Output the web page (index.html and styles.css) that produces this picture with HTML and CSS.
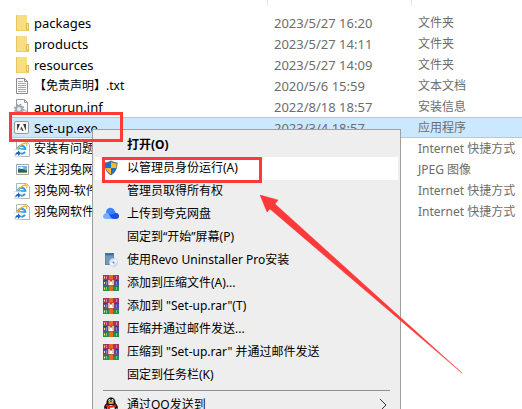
FILE: index.html
```
<!DOCTYPE html>
<html lang="zh-CN">
<head>
  <meta charset="UTF-8">
  <meta name="viewport" content="width=device-width, initial-scale=1.0">
  <title>Set-up</title>
  <link rel="stylesheet" href="styles.css">
</head>
<body>

  <!-- Shared icons -->
  <svg class="icon-defs" aria-hidden="true">
    <symbol id="icon-folder" viewBox="-2 0 16 16">
      <path d="M0 0h11v8h2v8H0z" fill="#f0cf6b"/>
      <path d="M0 0h11v15H1L0 16z" fill="#f8dd82"/>
      <path d="M0 0h1v16H0z" fill="#e9c55a"/>
      <path d="M10.500 8.500h2v6h-2z" fill="#fae8a5" stroke="#dfb850"/>
    </symbol>
    <symbol id="icon-text" viewBox="-2 0 16 16">
      <path d="M.5.5h8l3 3v12H.5z" fill="#fafafa" stroke="#8c8c8c"/>
      <path d="M8.500.5v3h3" fill="none" stroke="#8c8c8c"/>
      <path d="M2 3.500h5M2 5.500h8M2 7.500h8M2 9.500h8M2 11.500h8M2 13.500h8" stroke="#aaa"/>
    </symbol>
    <symbol id="icon-inf" viewBox="0 0 16 16">
      <path d="M2.500.5h8l3 3v12h-11z" fill="#fafafa" stroke="#999"/>
      <path d="M10.500.5v3h3" fill="none" stroke="#999"/>
      <circle cx="5" cy="10" r="3" fill="#eee" stroke="#a0a8b0" stroke-width="2"/>
      <circle cx="5" cy="10" r="4.500" fill="none" stroke="#a0a8b0" stroke-width="1.500" stroke-dasharray="2 1.530"/>
      <circle cx="10.500" cy="13" r="2" fill="#eee" stroke="#a4adb6"/>
    </symbol>
    <symbol id="icon-adobe" viewBox="0 0 16 16">
      <rect x=".5" y="1.500" width="14" height="12" rx="1.500" fill="#f7f7f7" stroke="#9a9a9a"/>
      <path d="M3 4h3L3 11zM9 4h3v7zM7.500 6.500 9.500 11H8.200l-.6-1.500H6.200z" fill="#3c3c3c"/>
    </symbol>
    <symbol id="icon-ie" viewBox="0 0 16 16">
      <path d="M2.500.5h10l3 3v12h-13z" fill="#fff" stroke="#b5b5b5"/>
      <path d="M11.600 8.500A4 4 0 1 0 11 10.800" fill="none" stroke="#2e9be6" stroke-width="2"/>
      <path d="M4.500 8h7.500" stroke="#2e9be6" stroke-width="1.600"/>
      <path d="M3 11.500C1.500 8.500 7.500 2 12 2c1.500.2 1 2 .2 3" fill="none" stroke="#f0b72f" stroke-width="1.400"/>
      <path d="M0 8.500h7v7H0z" fill="#fff" stroke="#ccc" stroke-width=".5"/>
      <path d="M1.500 15c-.5-2.800.7-4 2.500-4V9.300l3 3-3 2.700v-2c-1.200 0-2 .8-2.500 2z" fill="#1769c4"/>
    </symbol>
    <symbol id="icon-jpeg" viewBox="-2 0 16 16">
      <path d="M.5 2.500h12v10H.5z" fill="#fff" stroke="#a5a5a5"/>
      <path d="M2 4h9v7H2z" fill="#69b5e8"/>
      <path d="M2 7.500c3-2.500 5 0 9 1V11H2z" fill="#2d5c7d"/>
      <path d="M2 6c3-2 4-1 6 0l-2 1z" fill="#e7f4fc"/>
      <path d="M2 10h9v1H2z" fill="#6aa35e"/>
    </symbol>
    <symbol id="icon-shield" viewBox="0 0 16 16">
      <path d="M8 .5c2 1.400 4 1.800 6.500 2C14.500 8 13 12.500 8 15.500 3 12.500 1.500 8 1.500 2.500 4 2.300 6 1.900 8 .5z" fill="#5b6b78"/>
      <path d="M8 2v6H2.800C2.500 6.500 2.500 5 2.500 3.500 5 3.200 6.500 2.800 8 2z" fill="#1573c9"/>
      <path d="M8 2c1.500.8 3 1.200 5.500 1.500 0 1.500 0 3-.3 4.500H8z" fill="#fcb924"/>
      <path d="M2.800 8H8v6.300C5.500 12.800 3.500 10.500 2.800 8z" fill="#fcb924"/>
      <path d="M13.200 8H8v6.300c2.500-1.500 4.500-3.800 5.200-6.300z" fill="#1573c9"/>
    </symbol>
    <symbol id="icon-cloud" viewBox="0 0 16 16">
      <path d="M3 6c0-5 7-6 8.500-1.500L14 9l-5 4H4z" fill="#3f82ff"/>
      <path d="M0 10.500C0 7 4 6 6 8l4 5H3c-2 0-3-1-3-2.500z" fill="#75b0ff"/>
      <path d="M6 8c1 2 2 5 5 5h2c4 0 4-5.500.5-6C11 6.500 10 9.500 6 8z" fill="#1e50e6"/>
    </symbol>
    <symbol id="icon-revo" viewBox="0 0 16 16">
      <path d="M2 1h9v12H2z" fill="#5e87b2"/>
      <path d="M2 1h9v2H2z" fill="#416f9f"/>
      <path d="M3 4h7v8H3z" fill="#7198bd"/>
      <circle cx="10.500" cy="10.500" r="4" fill="#dbe8f3" stroke="#c0d0de"/>
      <path d="M10.500 10.500 12 6.800l2.300 2.400zM10.500 10.500l-1.300 3.700-2.300-2.500z" fill="#f9fcff"/>
      <circle cx="10.500" cy="10.500" r="1" fill="#648bb0"/>
    </symbol>
    <symbol id="icon-rar" viewBox="0 0 16 16">
      <path d="M0 0h16v5H0z" fill="#a83262"/>
      <path d="M0 5.500h16v5H0z" fill="#3f49b9"/>
      <path d="M0 11h16v5H0z" fill="#25914b"/>
      <path d="M0 5h16v.8H0zM0 10.400h16v.8H0z" fill="#27233f"/>
      <path d="M1 1.500h1v2H1zM1 7h1v2H1zM1 12.500h1v2H1z" fill="#ffe16c"/>
      <path d="M3 1h1v3H3zM3 6.500h1v3H3zM3 12h1v3H3zM13 1h1v3h-1zM13 6.500h1v3h-1zM13 12h1v3h-1z" fill="#ffffff66"/>
      <path d="M6 0h4v16H6z" fill="#e56b19"/>
      <path d="M4.500 4.500h7v6h-7z" fill="#b64335"/>
      <path d="M6 5v4.500h1.500V7h1v2.500H10V5" fill="none" stroke="#fff" stroke-width="1.200"/>
    </symbol>
    <symbol id="icon-qq" viewBox="0 0 16 16">
      <path d="M3.500 6C3-1.500 13-1.500 12.500 6c2 2 3 4.500 2 6-1 0-1.500-1-1.500-1 0 2-1 3-1 3H4s-1-1-1-3c0 0-.5 1-1.500 1-1-1.500 0-4 2-6z" fill="#111"/>
      <ellipse cx="8" cy="11.500" rx="3.700" ry="3.500" fill="#fff"/>
      <ellipse cx="6.500" cy="3.500" rx="1.100" ry="1.500" fill="#fff"/>
      <ellipse cx="9.500" cy="3.500" rx="1.100" ry="1.500" fill="#fff"/>
      <circle cx="6.800" cy="3.700" r=".5"/>
      <circle cx="9.200" cy="3.700" r=".5"/>
      <ellipse cx="8" cy="6" rx="3" ry="1" fill="#f5ad19"/>
      <path d="M3 7.500c3 1.500 7 1.500 10 0v2c-2 1-4 1.300-6 1.200V13H4.500v-3L3 9.500z" fill="#e61f23"/>
      <path d="M3 14h4v2H3zM9 14h4v2H9z" fill="#f5ad19"/>
    </symbol>
  </svg>

  <!-- File list -->
  <table class="file-list">
    <thead>
      <tr>
        <th class="col-name"><span class="divider"></span></th>
        <th class="col-date"><span class="divider"></span></th>
        <th></th>
      </tr>
    </thead>
    <tbody>
      <tr>
        <td><div class="file-name"><svg class="icon"><use href="#icon-folder"/></svg>packages</div></td>
        <td>2023/5/27 16:20</td>
        <td><span class="cjk">文件夹</span></td>
      </tr>
      <tr>
        <td><div class="file-name"><svg class="icon"><use href="#icon-folder"/></svg>products</div></td>
        <td>2023/5/27 14:11</td>
        <td><span class="cjk">文件夹</span></td>
      </tr>
      <tr>
        <td><div class="file-name"><svg class="icon"><use href="#icon-folder"/></svg>resources</div></td>
        <td>2023/5/27 14:09</td>
        <td><span class="cjk">文件夹</span></td>
      </tr>
      <tr>
        <td><div class="file-name"><svg class="icon"><use href="#icon-text"/></svg><span class="cjk">【免责声明】.txt</span></div></td>
        <td>2020/5/6 15:59</td>
        <td><span class="cjk">文本文档</span></td>
      </tr>
      <tr>
        <td><div class="file-name"><svg class="icon"><use href="#icon-inf"/></svg>autorun.inf</div></td>
        <td>2022/8/18 18:57</td>
        <td><span class="cjk">安装信息</span></td>
      </tr>
      <tr class="selected">
        <td><div class="file-name"><svg class="icon"><use href="#icon-adobe"/></svg>Set-up.exe</div></td>
        <td>2023/3/4 18:57</td>
        <td><span class="cjk">应用程序</span></td>
      </tr>
      <tr>
        <td><div class="file-name"><svg class="icon"><use href="#icon-ie"/></svg><span class="cjk">安装有问题</span></div></td>
        <td></td>
        <td><span class="cjk">Internet 快捷方式</span></td>
      </tr>
      <tr>
        <td><div class="file-name"><svg class="icon"><use href="#icon-jpeg"/></svg><span class="cjk">关注羽兔网</span></div></td>
        <td></td>
        <td><span class="cjk">JPEG 图像</span></td>
      </tr>
      <tr>
        <td><div class="file-name"><svg class="icon"><use href="#icon-ie"/></svg><span class="cjk">羽兔网-软件</span></div></td>
        <td></td>
        <td><span class="cjk">Internet 快捷方式</span></td>
      </tr>
      <tr>
        <td><div class="file-name"><svg class="icon"><use href="#icon-ie"/></svg><span class="cjk">羽兔网软件</span></div></td>
        <td></td>
        <td><span class="cjk">Internet 快捷方式</span></td>
      </tr>
    </tbody>
  </table>

  <!-- Context menu -->
  <div class="context-menu">
    <button class="menu-item default"><span class="icon"></span><span>打开(O)</span></button>
    <button class="menu-item active"><svg class="icon"><use href="#icon-shield"/></svg><span>以管理员身份运行(A)</span></button>
    <button class="menu-item"><span class="icon"></span><span>管理员取得所有权</span></button>
    <button class="menu-item"><svg class="icon"><use href="#icon-cloud"/></svg><span>上传到夸克网盘</span></button>
    <button class="menu-item"><span class="icon"></span><span>固定到“开始”屏幕(P)</span></button>
    <button class="menu-item"><svg class="icon"><use href="#icon-revo"/></svg><span>使用Revo Uninstaller Pro安装</span></button>
    <button class="menu-item"><svg class="icon"><use href="#icon-rar"/></svg><span>添加到压缩文件(A)...</span></button>
    <button class="menu-item"><svg class="icon"><use href="#icon-rar"/></svg><span>添加到 "Set-up.rar"(T)</span></button>
    <button class="menu-item"><svg class="icon"><use href="#icon-rar"/></svg><span>压缩并通过邮件发送...</span></button>
    <button class="menu-item"><svg class="icon"><use href="#icon-rar"/></svg><span>压缩到 "Set-up.rar" 并通过邮件发送</span></button>
    <button class="menu-item"><span class="icon"></span><span>固定到任务栏(K)</span></button>
    <hr>
    <button class="menu-item">
      <svg class="icon"><use href="#icon-qq"/></svg><span>通过QQ发送到</span>
      <svg class="submenu" viewBox="0 0 8 12"><path d="M1 0l6 6-6 6" fill="none" stroke="#333"/></svg>
    </button>
  </div>

  <!-- Annotations -->
  <div class="mark mark-file"></div>
  <div class="mark mark-menu"></div>
  <svg class="arrow" viewBox="0 0 202 179">
    <path d="M0 0l18 5-3 4 187 169L10 14l-3 3z" fill="#fc3a39" stroke="#fc3a39" stroke-width=".5"/>
  </svg>

</body>
</html>
```

FILE: styles.css
```
/* General Styles */
body {
  margin: 0;
  height: 100vh;
  position: relative;
  overflow: hidden;
  background-color: #fff;
  color: #000;
  font-family: "Noto Sans", "Noto Sans CJK SC", sans-serif;
  font-size: 13px;
}

.icon-defs {
  display: none;
}

.icon {
  width: 16px;
  height: 16px;
  flex: none;
}

.cjk {
  font-size: 12px;
}

/* File list */
.file-list {
  width: calc(100% - 10px);
  margin-left: 10px;
  table-layout: fixed;
  border-collapse: collapse;
}

.file-list th {
  height: 12px;
  padding: 0;
  vertical-align: top;
}

.col-name {
  width: 258px;
}

.col-date {
  width: 144px;
}

.divider {
  display: block;
  height: 6px;
  border-right: 1px solid #e5e5e5;
}

.file-list td {
  height: 21px;
  padding: 0 0 0 6px;
  line-height: 20px;
  color: #6d6d6d;
  white-space: nowrap;
}

.file-list td:first-child {
  padding-left: 4px;
}

.file-name {
  display: flex;
  align-items: center;
  gap: 4px;
  color: #000;
}

.selected {
  background-color: #cce8ff;
  box-shadow: inset 0 1px #99d1ff, inset 0 -1px #99d1ff;
}

/* Context menu */
.context-menu {
  position: absolute;
  top: 129px;
  left: 92px;
  width: 309px;
  box-sizing: border-box;
  padding: 4px 2px;
  background-color: #eee;
  border: 1px solid #a0a0a0;
}

.menu-item {
  display: flex;
  align-items: center;
  gap: 8px;
  width: 100%;
  height: 23px;
  padding: 0 11px 1px 8px;
  border: none;
  background: none;
  color: #000;
  font-family: inherit;
  font-size: 12px;
  line-height: 16px;
  text-align: left;
  white-space: nowrap;
}

.default {
  font-weight: bold;
}

.active {
  background-color: #fff;
}

.context-menu hr {
  height: 1px;
  margin: 3px 8px;
  border: none;
  background-color: #919191;
}

.submenu {
  width: 8px;
  height: 12px;
  margin-left: auto;
}

/* Annotations */
.mark {
  position: absolute;
  box-sizing: border-box;
  border: 3px solid #fc3a39;
}

.mark-file {
  top: 112px;
  left: 9px;
  width: 114px;
  height: 30px;
}

.mark-menu {
  top: 157px;
  left: 102px;
  width: 160px;
  height: 26px;
}

.arrow {
  position: absolute;
  top: 195px;
  left: 260px;
  width: 202px;
  height: 179px;
}
```
